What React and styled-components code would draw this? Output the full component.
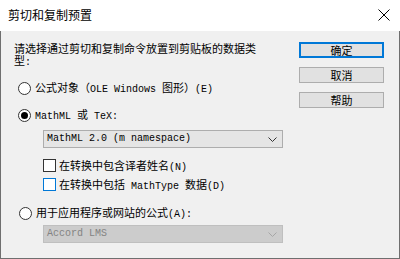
import React from "react";
import styled, { createGlobalStyle } from "styled-components";

const Global = createGlobalStyle`
  html, body { margin: 0; padding: 0; background: #f0f0f0; }
  #root { width: 400px; height: 259px; }
`;

const CJK = `"Noto Sans CJK SC", "Noto Sans", sans-serif`;
const MONO = `"Liberation Mono", "Noto Sans CJK SC", monospace`;

const Window = styled.div`
  width: 400px;
  height: 259px;
  display: flex;
  flex-direction: column;
  box-sizing: border-box;
  font-family: ${CJK};
  color: #000;
`;

const TitleBar = styled.div`
  height: 31px;
  flex: none;
  background: #fff;
  display: flex;
  align-items: center;
  justify-content: space-between;
  padding: 0 10px 0 8px;
`;

const Title = styled.span`
  font-size: 12px;
  line-height: 14px;
  margin-top: -1px;
`;

const CloseButton = styled.div`
  width: 12px;
  height: 12px;
  display: flex;
  margin-top: -1px;
`;

const Body = styled.div`
  flex: 1;
  background: #f0f0f0;
  border: 1px solid #6f6f6f;
  border-top: none;
  display: flex;
  padding: 10px 15px 0 13px;
`;

const Main = styled.div`
  flex: 1;
  display: flex;
  flex-direction: column;
`;

const Prompt = styled.div`
  width: 250px;
  height: 24px;
  flex: none;
  font-size: 11px;
  line-height: 12px;
  margin-top: 1px;
`;

const Latin = styled.span`
  font-family: ${MONO};
  font-size: 10px;
  line-height: 10px;
`;

const Label = styled.span`
  white-space: pre;
`;

const Row = styled.div`
  display: flex;
  align-items: center;
  flex: none;
  height: ${(p) => p.$h || 14}px;
  margin-top: ${(p) => p.$mt || 0}px;
  margin-left: ${(p) => p.$ml || 0}px;
  font-size: 11px;
  line-height: 13px;
  white-space: nowrap;
`;

const Radio = styled.span`
  width: 13px;
  height: 13px;
  box-sizing: border-box;
  border: 1px solid #333;
  border-radius: 50%;
  background: #fff;
  display: flex;
  align-items: center;
  justify-content: center;
  margin-right: 4px;
  flex: none;
  &::after {
    content: "";
    display: ${(p) => (p.$checked ? "block" : "none")};
    width: 7px;
    height: 7px;
    border-radius: 50%;
    background: #000;
  }
`;

const Check = styled.span`
  width: 13px;
  height: 13px;
  box-sizing: border-box;
  border: 1px solid ${(p) => (p.$hot ? "#0078d7" : "#333")};
  background: #fff;
  margin-right: 3px;
  flex: none;
`;

const Select = styled.div`
  height: 18px;
  width: 240px;
  flex: none;
  box-sizing: border-box;
  margin-top: ${(p) => p.$mt}px;
  margin-left: 29px;
  display: flex;
  align-items: center;
  justify-content: space-between;
  padding: 0 5px 0 3px;
  border: 1px solid ${(p) => (p.$disabled ? "#bfbfbf" : "#adadad")};
  background: ${(p) => (p.$disabled ? "#cccccc" : "#e5e5e5")};
  color: ${(p) => (p.$disabled ? "#838383" : "#000")};
  font-family: ${MONO};
  font-size: 10px;
  line-height: 12px;
  white-space: pre;
`;

const Buttons = styled.div`
  width: 85px;
  display: flex;
  flex-direction: column;
  gap: 9px;
  padding-top: 1px;
`;

const Button = styled.div`
  height: 16px;
  box-sizing: border-box;
  border: ${(p) => (p.$default ? "2px solid #0078d7" : "1px solid #adadad")};
  background: #e1e1e1;
  display: flex;
  align-items: center;
  justify-content: center;
  font-size: 11px;
  line-height: 13px;
`;

const Chevron = ({ color }) => (
  <svg width="9" height="5" viewBox="0 0 9 5">
    <path d="M0.5 0.5 L4.5 4.5 L8.5 0.5" fill="none" stroke={color} strokeWidth="1" />
  </svg>
);

export default function App() {
  return (
    <>
      <Global />
      <Window>
        <TitleBar>
          <Title>剪切和复制预置</Title>
          <CloseButton>
            <svg width="12" height="12" viewBox="0 0 12 12">
              <path d="M0.5 0.5 L11.5 11.5 M11.5 0.5 L0.5 11.5" stroke="#000" strokeWidth="1" />
            </svg>
          </CloseButton>
        </TitleBar>
        <Body>
          <Main>
            <Prompt>
              请选择通过剪切和复制命令放置到剪贴板的数据类型<Latin>:</Latin>
            </Prompt>
            <Row $mt={15} $ml={4}>
              <Radio />
              <Label>
                公式对象（<Latin>OLE Windows </Latin>图形）<Latin>(E)</Latin>
              </Label>
            </Row>
            <Row $mt={13} $ml={4}>
              <Radio $checked />
              <Label>
                <Latin>MathML </Latin>或<Latin> TeX:</Latin>
              </Label>
            </Row>
            <Select $mt={8}>
              <span>MathML 2.0 (m namespace)</span>
              <Chevron color="#333" />
            </Select>
            <Row $h={13} $mt={11} $ml={29}>
              <Check />
              <Label>
                在转换中包含译者姓名<Latin>(N)</Latin>
              </Label>
            </Row>
            <Row $h={13} $mt={6} $ml={29}>
              <Check $hot />
              <Label>
                在转换中包括<Latin> MathType </Latin>数据<Latin>(D)</Latin>
              </Label>
            </Row>
            <Row $mt={15} $ml={5}>
              <Radio />
              <Label>
                用于应用程序或网站的公式<Latin>(A):</Latin>
              </Label>
            </Row>
            <Select $mt={5} $disabled>
              <span>Accord LMS</span>
              <Chevron color="#a6a6a6" />
            </Select>
          </Main>
          <Buttons>
            <Button $default>确定</Button>
            <Button>取消</Button>
            <Button>帮助</Button>
          </Buttons>
        </Body>
      </Window>
    </>
  );
}
